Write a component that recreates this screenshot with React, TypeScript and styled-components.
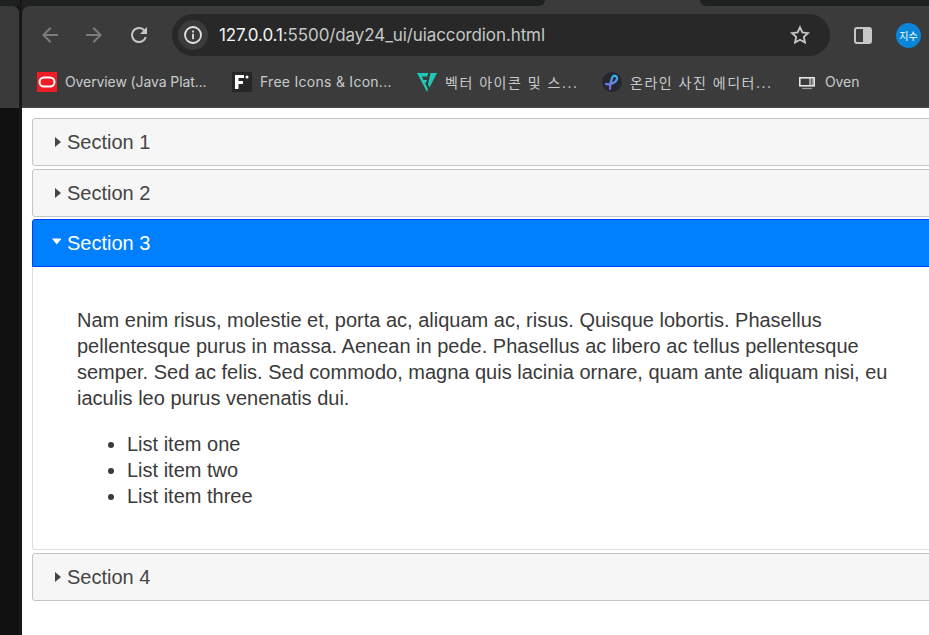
import React from 'react';
import styled, { createGlobalStyle } from 'styled-components';

const GlobalStyle = createGlobalStyle`
  html, body {
    margin: 0;
    padding: 0;
    width: 929px;
    height: 635px;
    overflow: hidden;
    background: #111;
  }
  * { box-sizing: border-box; }
`;

const Desktop = styled.div`
  display: flex;
  width: 929px;
  height: 635px;
  overflow: hidden;
`;

const OtherWindow = styled.div`
  width: 20px;
  flex: none;
  display: flex;
  flex-direction: column;
  background: #111;
  border-right: 1px solid #1c1c1c;
`;

const OtherTop = styled.div`
  height: 6px;
  background: #1f2020;
`;

const OtherBar = styled.div`
  height: 102px;
  background: #3a3a3a;
  border-top-right-radius: 6px;
`;

const Gap = styled.div`
  width: 2px;
  flex: none;
  background: #161616;
`;

const Browser = styled.div`
  flex: 1;
  min-width: 0;
  display: flex;
  flex-direction: column;
  background: #1f2020;
`;

const TabStrip = styled.div`
  height: 6px;
  flex: none;
  display: flex;
  background: #3b3b3b;
`;

const TabPill = styled.div<{ $w: number }>`
  width: ${({ $w }) => $w}px;
  background: #1f2020;
  border-radius: 0 0 8px 0;
  flex: none;
`;

const TabPillRight = styled.div`
  flex: 1;
  margin-left: 155px;
  background: #1f2020;
  border-radius: 0 0 0 8px;
`;

const Toolbar = styled.div`
  height: 50px;
  flex: none;
  display: flex;
  align-items: center;
  padding: 8px 0 0 6px;
  background: #3b3b3b;
  border-top-left-radius: 8px;
`;

const NavButton = styled.div<{ $w?: number }>`
  width: ${({ $w }) => $w || 44}px;
  height: 42px;
  flex: none;
  display: flex;
  align-items: center;
  justify-content: center;
`;

const Omnibox = styled.div`
  width: 658px;
  height: 42px;
  flex: none;
  margin-left: 10px;
  display: flex;
  align-items: center;
  padding-left: 6px;
  background: #282828;
  border-radius: 21px;
`;

const InfoChip = styled.div`
  width: 30px;
  height: 30px;
  flex: none;
  display: flex;
  align-items: center;
  justify-content: center;
  background: #3b3b3b;
  border-radius: 50%;
`;

const Url = styled.div`
  flex: 1;
  margin-left: 11px;
  font-family: 'Inter', 'Roboto', sans-serif;
  font-size: 17px;
  letter-spacing: -0.1px;
  color: #c4c7c5;
  white-space: nowrap;
`;

const Host = styled.span`
  color: #f1f3f4;
`;

const StarSlot = styled.div`
  width: 30px;
  height: 30px;
  margin-right: 15px;
  flex: none;
  display: flex;
  align-items: center;
  justify-content: center;
`;

const SidePanelSlot = styled.div`
  width: 24px;
  margin-left: 21px;
  flex: none;
  display: flex;
  align-items: center;
  justify-content: center;
`;

const Avatar = styled.div`
  width: 25px;
  height: 25px;
  flex: none;
  margin-left: 21px;
  display: flex;
  align-items: center;
  justify-content: center;
  border-radius: 50%;
  background: #0a86d8;
  color: #fff;
  font-family: 'Noto Sans CJK KR', sans-serif;
  font-size: 10px;
`;

const Bookmarks = styled.div`
  height: 52px;
  flex: none;
  display: flex;
  align-items: center;
  padding: 0 0 0 15px;
  background: #3b3b3b;
  border-bottom: 1px solid #4a4a4a;
`;

const Bookmark = styled.div<{ $w: number; $ls?: number }>`
  width: ${({ $w }) => $w}px;
  flex: none;
  display: flex;
  align-items: center;
  gap: 8px;
  font-family: 'Inter', 'Roboto', 'Noto Sans CJK KR', sans-serif;
  font-size: 14px;
  letter-spacing: ${({ $ls }) => $ls ?? -0.1}px;
  color: #c8cbce;
  white-space: nowrap;
`;

const Favicon = styled.svg`
  width: 20px;
  height: 20px;
  flex: none;
`;

const Page = styled.div`
  flex: 1;
  background: #fff;
  padding: 10px 0 0 10px;
  overflow: hidden;
`;

const Accordion = styled.div`
  width: 908px;
  font-family: 'Liberation Sans', Arial, sans-serif;
`;

const Header = styled.div<{ $active?: boolean }>`
  height: 48px;
  margin-top: ${({ $active }) => ($active ? '2px' : '3px')};
  display: flex;
  align-items: center;
  padding-left: 18px;
  gap: 6px;
  border: 1px solid ${({ $active }) => ($active ? '#003eff' : '#c5c5c5')};
  border-radius: ${({ $active }) => ($active ? '3px 3px 0 0' : '3px')};
  background: ${({ $active }) => ($active ? '#007fff' : '#f6f6f6')};
  color: ${({ $active }) => ($active ? '#fff' : '#454545')};
  font-size: 20px;

  &:first-child {
    margin-top: 0;
  }
`;

const Caret = styled.svg`
  width: 10px;
  height: 12px;
  flex: none;
  fill: currentColor;
`;

const Content = styled.div`
  height: 283px;
  padding: 40px 44px 0;
  border: 1px solid #ddd;
  border-top: 0;
  border-radius: 0 0 3px 3px;
  color: #3a3a3a;
  font-size: 20px;
  line-height: 26px;
`;

const Paragraph = styled.p`
  margin: 0 0 20px;
`;

const Items = styled.ul`
  margin: 0;
  padding: 0 0 0 50px;
`;

const Chevron = ({ d, color }: { d: string; color: string }) => (
  <svg width="24" height="24" viewBox="0 0 24 24" fill={color}>
    <path d={d} />
  </svg>
);

const CaretRight = () => (
  <Caret viewBox="0 0 10 12"><path d="M4 1l6 5-6 5z" /></Caret>
);

const CaretDown = () => (
  <Caret viewBox="0 0 10 12"><path d="M1 1.500h9.500L5.750 7.500z" /></Caret>
);

export default function App() {
  return (
    <>
      <GlobalStyle />
      <Desktop>
        <OtherWindow>
          <OtherTop />
          <OtherBar />
        </OtherWindow>
        <Gap />
        <Browser>
          <TabStrip>
            <TabPill $w={523} />
            <TabPillRight />
          </TabStrip>
          <Toolbar>
            <NavButton>
              <Chevron color="#7b7d7f" d="M20 11H7.83l5.59-5.59L12 4l-8 8 8 8 1.41-1.41L7.83 13H20v-2z" />
            </NavButton>
            <NavButton>
              <Chevron color="#7b7d7f" d="M12 4l-1.41 1.41L16.17 11H4v2h12.17l-5.58 5.59L12 20l8-8z" />
            </NavButton>
            <NavButton $w={46}>
              <Chevron color="#c7c7c7" d="M17.65 6.35A7.96 7.96 0 0 0 12 4a8 8 0 1 0 7.73 10h-2.08A6 6 0 1 1 12 6c1.66 0 3.14.69 4.22 1.78L13 11h7V4l-2.35 2.35z" />
            </NavButton>
            <Omnibox>
              <InfoChip>
                <svg width="20" height="20" viewBox="0 0 20 20" fill="none">
                  <circle cx="10" cy="10" r="8" stroke="#e3e3e3" strokeWidth="1.8" />
                  <rect x="9.1" y="8.8" width="1.8" height="5.4" fill="#e3e3e3" />
                  <rect x="9.1" y="5.6" width="1.8" height="1.9" fill="#e3e3e3" />
                </svg>
              </InfoChip>
              <Url><Host>127.0.0.1</Host>:5500/day24_ui/uiaccordion.html</Url>
              <StarSlot>
                <svg width="22" height="22" viewBox="0 0 24 24" fill="none">
                  <path d="M12 3.6l2.6 5.6 6.1.7-4.5 4.2 1.2 6.1L12 17.2l-5.4 3 1.2-6.1-4.5-4.2 6.1-.7z" stroke="#c7c7c7" strokeWidth="2" strokeLinejoin="miter" />
                </svg>
              </StarSlot>
            </Omnibox>
            <SidePanelSlot>
              <svg width="18" height="17" viewBox="0 0 18 17">
                <rect x="1" y="1" width="16" height="15" rx="2" fill="none" stroke="#c7c7c7" strokeWidth="2" />
                <rect x="9" y="1" width="8" height="15" fill="#c7c7c7" />
              </svg>
            </SidePanelSlot>
            <Avatar>지수</Avatar>
          </Toolbar>
          <Bookmarks>
            <Bookmark $w={195}>
              <Favicon viewBox="0 0 20 20">
                <rect width="20" height="20" fill="#ee1c25" />
                <rect x="2.500" y="5.500" width="15" height="9" rx="4.500" fill="none" stroke="#fff" strokeWidth="2" />
              </Favicon>
              Overview (Java Plat...
            </Bookmark>
            <Bookmark $w={185} $ls={0.27}>
              <Favicon viewBox="0 0 20 20">
                <rect width="20" height="20" fill="#262626" />
                <path d="M3 3h9v3H6.500v3H11v3H6.500v5H3z" fill="#fff" />
                <circle cx="15" cy="5" r="1.500" fill="#fff" />
              </Favicon>
              Free Icons &amp; Icon...
            </Bookmark>
            <Bookmark $w={185} $ls={1.5}>
              <Favicon viewBox="0 0 20 20">
                <path d="M0 1h11.500L10 4.500H5L6.500 8H10l-1.300 3H8l3 6-1 3z" fill="#1fc7b6" />
                <path d="M13.500 1H20l-7.500 14.500L11 12.500z" fill="#1fc7b6" />
              </Favicon>
              벡터 아이콘 및 스...
            </Bookmark>
            <Bookmark $w={195} $ls={1.5}>
              <Favicon viewBox="0 0 20 20">
                <defs>
                  <linearGradient id="ribbon" x1="0" y1="0" x2="0" y2="1">
                    <stop offset="0" stopColor="#35b6ee" />
                    <stop offset="1" stopColor="#8a5fe0" />
                  </linearGradient>
                </defs>
                <circle cx="10" cy="10" r="10" fill="#24282e" />
                <path d="M4 12C7 13 14 11 15 7C15.500 4 12 2.500 10.500 5C9 8 8 13 8 17" fill="none" stroke="url(#ribbon)" strokeWidth="2.200" strokeLinecap="round" />
              </Favicon>
              온라인 사진 에디터...
            </Bookmark>
            <Bookmark $w={70}>
              <Favicon viewBox="0 0 20 20">
                <rect x="2.800" y="5.800" width="14.400" height="8" fill="none" stroke="#e6e6e6" strokeWidth="1.600" />
                <path d="M13 6v7" stroke="#e6e6e6" strokeWidth="1.200" />
                <path d="M14.500 8h2M14.500 10h2M14.500 12h2" stroke="#e6e6e6" strokeWidth="1" />
                <path d="M5 16.500h10" stroke="#999" strokeWidth="1.200" />
              </Favicon>
              Oven
            </Bookmark>
          </Bookmarks>
          <Page>
            <Accordion>
              <Header>
                <CaretRight />
                Section 1
              </Header>
              <Header>
                <CaretRight />
                Section 2
              </Header>
              <Header $active>
                <CaretDown />
                Section 3
              </Header>
              <Content>
                <Paragraph>
                  Nam enim risus, molestie et, porta ac, aliquam ac, risus. Quisque lobortis. Phasellus pellentesque purus in massa. Aenean in pede. Phasellus ac libero ac tellus pellentesque semper. Sed ac felis. Sed commodo, magna quis lacinia ornare, quam ante aliquam nisi, eu iaculis leo purus venenatis dui.
                </Paragraph>
                <Items>
                  <li>List item one</li>
                  <li>List item two</li>
                  <li>List item three</li>
                </Items>
              </Content>
              <Header>
                <CaretRight />
                Section 4
              </Header>
            </Accordion>
          </Page>
        </Browser>
      </Desktop>
    </>
  );
}
